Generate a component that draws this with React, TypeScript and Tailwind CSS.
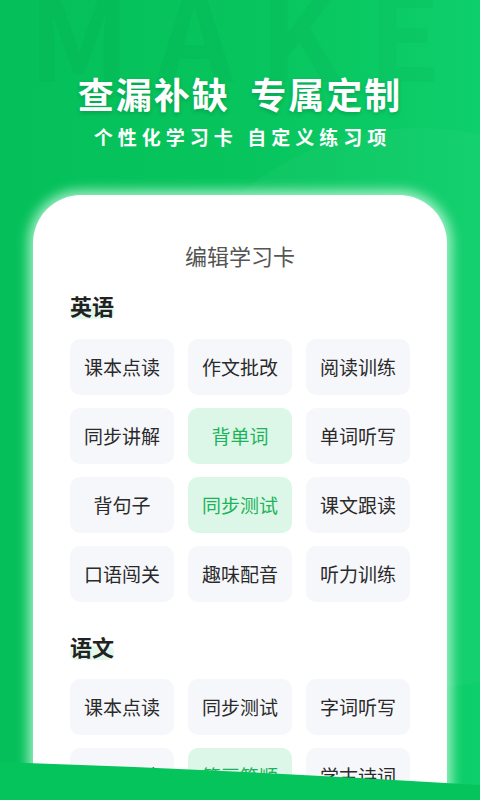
import React from "react";

type Tile = { label: string; active?: boolean };

const english: Tile[] = [
  { label: "课本点读" },
  { label: "作文批改" },
  { label: "阅读训练" },
  { label: "同步讲解" },
  { label: "背单词", active: true },
  { label: "单词听写" },
  { label: "背句子" },
  { label: "同步测试", active: true },
  { label: "课文跟读" },
  { label: "口语闯关" },
  { label: "趣味配音" },
  { label: "听力训练" },
];

const chinese: Tile[] = [
  { label: "课本点读" },
  { label: "同步测试" },
  { label: "字词听写" },
  { label: "课文朗读" },
  { label: "笔画笔顺", active: true },
  { label: "学古诗词" },
];

const Heading: React.FC<{ text: string; className?: string }> = ({ text, className }) => (
  <div className={"relative inline-block " + (className ?? "")}>
    <span className="absolute left-0 right-0 bottom-[1px] h-[14px] rounded-[6px] bg-[#e3f8ec]" />
    <span className="relative text-[22px] leading-[30px] font-bold text-[#222]">{text}</span>
  </div>
);

const Grid: React.FC<{ items: Tile[]; className?: string }> = ({ items, className }) => (
  <div className={"grid grid-cols-3 gap-x-[14px] gap-y-[13px] " + (className ?? "")}>
    {items.map((t, i) => (
      <div
        key={i}
        className={
          "h-[56px] rounded-[10px] flex items-center justify-center text-[19px] " +
          (t.active ? "bg-[#dcf7e8] text-[#1db35a]" : "bg-[#f6f7fb] text-[#2a2a2a]")
        }
      >
        {t.label}
      </div>
    ))}
  </div>
);

export default function App() {
  return (
    <div
      className="relative w-[480px] h-[800px] overflow-hidden bg-gradient-to-r from-[#05c05a] via-[#07c45d] to-[#0dcf6b]"
      style={{ fontFamily: '"Noto Sans CJK SC", "Noto Sans", sans-serif' }}
    >
      {/* faint watermark */}
      <div
        aria-hidden
        className="absolute left-[28px] top-[-30px] text-[120px] leading-none font-bold tracking-[26px] text-black/[0.022] select-none whitespace-nowrap"
      >
        MAKE
      </div>
      <div className="absolute right-[-220px] top-[128px] w-[560px] h-[560px] rounded-full bg-white/[0.03]" />

      <div className="relative flex flex-col items-center pt-[71px]">
        <h1 className="text-[36px] leading-[44px] font-bold text-white tracking-[2px] [text-shadow:0_2px_4px_rgba(0,0,0,0.18)]">
          查漏补缺&nbsp;&nbsp;专属定制
        </h1>
        <p className="mt-[9px] text-[19px] leading-[26px] font-bold text-white tracking-[5px] pl-[5px]">
          个性化学习卡 自定义练习项
        </p>
      </div>

      <div className="relative mx-[33px] mt-[45px] rounded-t-[48px] bg-white px-[37px] pt-[45px] h-[700px] shadow-[0_0_12px_5px_rgba(215,255,232,0.7)]">
        <div className="text-center text-[22px] leading-[30px] text-[#555]">编辑学习卡</div>
        <Heading text="英语" className="mt-[20px]" />
        <Grid items={english} className="mt-[19px]" />
        <Heading text="语文" className="mt-[29px]" />
        <Grid items={chinese} className="mt-[18px]" />
      </div>

      <svg className="absolute left-0 bottom-0" width="480" height="40" viewBox="0 0 480 40">
        <path d="M0 2 Q240 10 480 25 L480 40 L0 40 Z" fill="#06c45c" />
      </svg>
    </div>
  );
}
